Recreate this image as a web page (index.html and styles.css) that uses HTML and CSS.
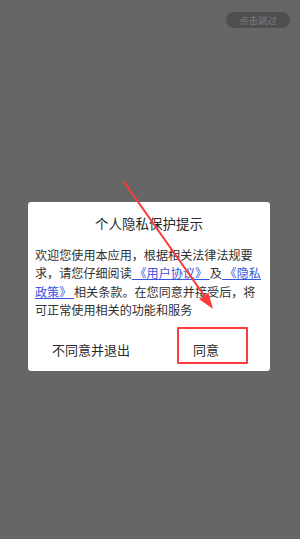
FILE: index.html
```html
<!DOCTYPE html>
<html lang="zh">
<head>
<meta charset="utf-8">
<link rel="stylesheet" href="styles.css">
</head>
<body>
<div class="page">
  <div class="topbar"><span class="skip">点击跳过</span></div>
  <div class="dialog">
    <div class="title">个人隐私保护提示</div>
    <p class="body">欢迎您使用本应用，根据相关法律法规要求，请您仔细阅读<a class="link"> 《用户协议》 </a>及<a class="link"> 《隐私</a><a class="link">政策》 </a>相关条款。在您同意并接受后，将可正常使用相关的功能和服务</p>
    <div class="actions">
      <div class="btn btn-left">不同意并退出</div>
      <div class="btn btn-right">同意</div>
    </div>
  </div>
  <div class="mark-box"></div>
  <svg class="arrow" width="300" height="539" viewBox="0 0 300 539">
    <line x1="124" y1="182" x2="204.5" y2="296" stroke="#ff3a3a" stroke-width="2"/>
    <polygon points="213,309 199.4,299.2 208.4,292.8" fill="#ff3a3a"/>
  </svg>
</div>
</body>
</html>
```
FILE: styles.css
```css
html, body {
  margin: 0;
  padding: 0;
}
body {
  background: #666666;
  font-family: "Noto Sans CJK SC", "Noto Sans", sans-serif;
}
.page {
  position: relative;
  width: 300px;
  height: 539px;
  overflow: hidden;
  display: flex;
  flex-direction: column;
}
.topbar {
  display: flex;
  justify-content: flex-end;
  padding: 12px 10px 0 0;
}
.skip {
  display: flex;
  align-items: center;
  justify-content: center;
  width: 64px;
  height: 16px;
  border-radius: 8px;
  background: #4f4f4f;
  color: #7a7a7a;
  font-size: 9.5px;
  line-height: 16px;
}
.dialog {
  margin: 174px 0 0 28px;
  width: 242px;
  height: 169px;
  background: #ffffff;
  border-radius: 3px;
  display: flex;
  flex-direction: column;
  box-sizing: border-box;
  padding-top: 11px;
}
.title {
  text-align: center;
  font-size: 13.5px;
  line-height: 20px;
  color: #2a2a2a;
}
.body {
  margin: 13px 0 0 0;
  padding: 0 6px 0 7px;
  font-size: 12.1px;
  line-height: 18.4px;
  color: #303030;
}
.link {
  color: #3b54e0;
  text-decoration: underline;
}
.actions {
  margin-top: auto;
  height: 44px;
  display: grid;
  grid-template-columns: 1fr 1fr;
}
.btn {
  display: flex;
  align-items: center;
  justify-content: center;
  font-size: 13px;
  color: #2a2a2a;
}
.btn-left {
  padding-left: 5px;
}
.btn-right {
  padding-right: 7px;
}
.mark-box {
  position: absolute;
  left: 177px;
  top: 327px;
  width: 71px;
  height: 37px;
  box-sizing: border-box;
  border: 2px solid #ff3b3b;
  border-radius: 1px;
}
.arrow {
  position: absolute;
  left: 0;
  top: 0;
  pointer-events: none;
}
```
